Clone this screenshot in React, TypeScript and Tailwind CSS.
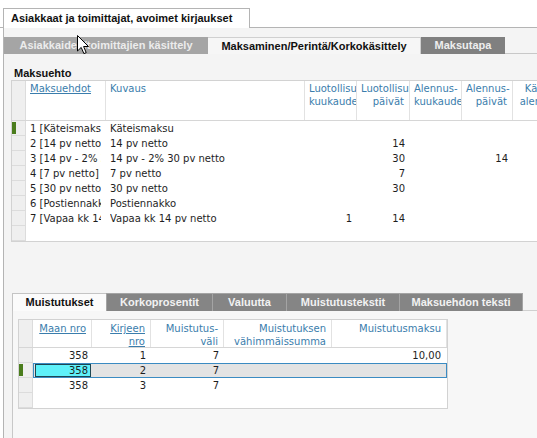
import React from 'react';

type Col = { w: number; head: string[]; link?: boolean; right?: boolean };

const upperCols: Col[] = [
  { w: 80, head: ['Maksuehdot'], link: true },
  { w: 199, head: ['Kuvaus'] },
  { w: 52, head: ['Luotollisuus', 'kuukaudet'], right: true },
  { w: 53, head: ['Luotollisuus', 'päivät'], right: true },
  { w: 52, head: ['Alennus-', 'kuukaudet'], right: true },
  { w: 51, head: ['Alennus-', 'päivät'], right: true },
  { w: 52, head: ['Käteis-', 'alennus'], right: true },
];

const upperRows: string[][] = [
  ['1 [Käteismaksu]', 'Käteismaksu', '', '', '', '', ''],
  ['2 [14 pv netto]', '14 pv netto', '', '14', '', '', ''],
  ['3 [14 pv - 2% 30 pv netto]', '14 pv - 2% 30 pv netto', '', '30', '', '14', ''],
  ['4 [7 pv netto]', '7 pv netto', '', '7', '', '', ''],
  ['5 [30 pv netto]', '30 pv netto', '', '30', '', '', ''],
  ['6 [Postiennakko]', 'Postiennakko', '', '', '', '', ''],
  ['7 [Vapaa kk 14 pv netto]', 'Vapaa kk 14 pv netto', '1', '14', '', '', ''],
];

const lowerCols: Col[] = [
  { w: 59, head: ['Maan nro'], link: true, right: true },
  { w: 59, head: ['Kirjeen', 'nro'], link: true, right: true },
  { w: 73, head: ['Muistutus-', 'väli'], right: true },
  { w: 108, head: ['Muistutuksen', 'vähimmäissumma'], right: true },
  { w: 115, head: ['Muistutusmaksu'], right: true },
];

const lowerRows: string[][] = [
  ['358', '1', '7', '', '10,00'],
  ['358', '2', '7', '', ''],
  ['358', '3', '7', '', ''],
];

const tabFont = "font-['Liberation_Sans',Arial,sans-serif] text-[11px] font-bold";
const gridFont = "font-['DejaVu_Sans',Verdana,sans-serif] text-[10px]";

function HeadCell({ col, pt }: { col: Col; pt: string }) {
  return (
    <div
      className={`shrink-0 h-full overflow-hidden border-r border-[#e2e2e2] pl-[4px] pr-[5px] ${pt} leading-[13px] text-[#3a7dac] ${col.right ? 'text-right' : 'text-left'}`}
      style={{ width: col.w }}
    >
      {col.head.map(line => (
        <div key={line} className={`whitespace-nowrap ${col.link ? 'underline' : ''}`}>
          {line}
        </div>
      ))}
    </div>
  );
}

function Selector({ active }: { active?: boolean }) {
  return (
    <div className="w-[14px] shrink-0 h-full bg-[#efefef] border-r border-b border-[#dcdcdc] flex items-center">
      {active && <div className="w-[4px] h-[12px] bg-[#4b7d1d]" />}
    </div>
  );
}

function UpperGrid() {
  return (
    <div className={`ml-[7px] w-[600px] border-l border-t border-b border-[#d2d2d2] bg-white ${gridFont}`}>
      <div className="flex h-[40px] border-b border-[#d6d6d6]">
        <div className="w-[14px] shrink-0 h-full bg-[#efefef] border-r border-[#dcdcdc]" />
        {upperCols.map((c, i) => (
          <HeadCell key={i} col={c} pt="pt-[1px]" />
        ))}
      </div>
      {[...upperRows, null].map((r, ri) => (
        <div key={ri} className="flex h-[15px] leading-[15px] text-[#1e1e1e]">
          <Selector active={ri === 0} />
          {upperCols.map((c, ci) => (
            <div
              key={ci}
              className={`shrink-0 pl-[4px] pr-[5px] ${c.right ? 'text-right' : 'text-left'}`}
              style={{ width: c.w }}
            >
              <div className="overflow-hidden whitespace-nowrap">{r ? r[ci] : ''}</div>
            </div>
          ))}
        </div>
      ))}
    </div>
  );
}

function LowerGrid() {
  return (
    <div className={`w-[430px] border border-[#d2d2d2] bg-white ${gridFont}`}>
      <div className="flex h-[28px] border-b border-[#d6d6d6]">
        <div className="w-[14px] shrink-0 h-full bg-[#efefef] border-r border-[#dcdcdc]" />
        {lowerCols.map((c, i) => (
          <HeadCell key={i} col={c} pt="pt-[2px]" />
        ))}
      </div>
      {[...lowerRows, null].map((r, ri) => {
        const sel = ri === 1;
        return (
          <div key={ri} className="flex h-[15px] leading-[13px] text-[#1e1e1e]">
            <Selector active={sel} />
            <div
              className={`flex flex-1 h-full ${sel ? 'border border-[#3b8bc2] bg-[#e3e3e3]' : 'border border-transparent'}`}
            >
              {lowerCols.map((c, ci) => (
                <div
                  key={ci}
                  className={`shrink-0 h-full whitespace-nowrap text-right ${ci === 0 ? '' : 'pr-[5px]'}`}
                  style={{ width: ci === 0 || ci === lowerCols.length - 1 ? c.w - 1 : c.w }}
                >
                  {ci === 0 ? (
                    <div
                      className={`h-full ${sel ? 'ml-[1px] mr-[1px] bg-[#5ef1f9] border border-[#1d4652] pr-[2px] leading-[11px]' : 'pr-[4px]'}`}
                    >
                      {r ? r[ci] : ''}
                    </div>
                  ) : r ? (
                    r[ci]
                  ) : (
                    ''
                  )}
                </div>
              ))}
            </div>
          </div>
        );
      })}
    </div>
  );
}

function Cursor() {
  return (
    <svg className="absolute left-[77px] top-[35px]" width="13" height="20" viewBox="0 0 13 20">
      <path
        d="M0.5 0.5 L0.5 16 L4.2 12.4 L6.9 18.6 L9.2 17.6 L6.6 11.5 L11.5 11.5 Z"
        fill="#fff"
        stroke="#000"
        strokeWidth="1"
      />
    </svg>
  );
}

export default function App() {
  return (
    <div className="relative w-[537px] h-[438px] overflow-hidden bg-white flex flex-col">
      {/* top tab */}
      <div className="flex h-[28px] pt-[8px] shrink-0">
        <div className="w-[3px] border-b border-[#b4b4b4]" />
        <div
          className={`w-[247px] h-[20px] border-l border-t border-r border-[#b4b4b4] bg-white pl-[7px] leading-[19px] text-[#111] ${tabFont}`}
        >
          Asiakkaat ja toimittajat, avoimet kirjaukset
        </div>
        <div className="flex-1 border-b border-[#b4b4b4]" />
      </div>

      <div className="ml-[3px] flex-1 border-l border-[#b4b4b4] bg-[#f4f4f4] flex flex-col">
        {/* second tabs */}
        <div className={`mt-[9px] flex h-[17px] leading-[17px] ${tabFont}`}>
          <div className="w-[204px] bg-[#a5a5a5] text-[#ececec] text-center">Asiakkaiden/toimittajien käsittely</div>
          <div className="w-[213px] bg-[#f6f6f6] text-[#111] text-center border-t border-r border-[#d0d0d0] leading-[16px]">
            Maksaminen/Perintä/Korkokäsittely
          </div>
          <div className="w-[84px] bg-[#808080] text-[#eeeeee] text-center">Maksutapa</div>
          <div className="flex-1 border-b border-[#c8c8c8]" />
        </div>

        <div className={`pt-[13px] pl-[10px] leading-[13px] text-[#111] ${tabFont}`}>Maksuehto</div>
        <UpperGrid />

        {/* bottom tabs */}
        <div className={`mt-[51px] ml-[8px] flex h-[18px] leading-[17px] ${tabFont}`}>
          <div className="w-[94px] bg-[#fbfbfb] text-[#111] text-center border-l border-t border-[#c4c4c4]">Muistutukset</div>
          <div className="w-[106px] bg-[#858585] text-[#f2f2f2] text-center border-t border-l border-[#a4a4a4]">Korkoprosentit</div>
          <div className="w-[74px] bg-[#858585] text-[#f2f2f2] text-center border-t border-l border-[#a4a4a4]">Valuutta</div>
          <div className="w-[113px] bg-[#858585] text-[#f2f2f2] text-center border-t border-l border-[#a4a4a4]">Muistutustekstit</div>
          <div className="w-[124px] bg-[#858585] text-[#f2f2f2] text-center border-t border-l border-r border-[#a4a4a4]">Maksuehdon teksti</div>
          <div className="flex-1 border-b border-[#d0d0d0]" />
        </div>
        <div className="ml-[8px] flex-1 border-l border-[#c8c8c8] bg-[#f7f7f7] pt-[8px] pl-[5px]">
          <LowerGrid />
        </div>
      </div>

      <Cursor />
    </div>
  );
}
